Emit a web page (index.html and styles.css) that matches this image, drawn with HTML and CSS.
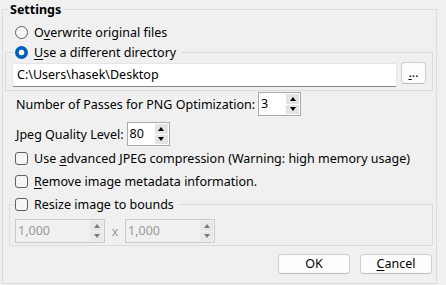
FILE: index.html
```html
<!DOCTYPE html>
<html lang="en">
<head>
    <meta charset="UTF-8">
    <title>Settings</title>
    <link rel="stylesheet" href="styles.css">
</head>
<body>
    <fieldset class="settings">
        <legend class="settings-title">Settings</legend>

        <label class="option-row first">
            <span class="radio"></span>
            <span>O<u>v</u>erwrite original files</span>
        </label>

        <fieldset class="group dir-group">
            <legend>
                <label class="option-row">
                    <span class="radio checked"></span>
                    <span><u>U</u>se a different directory</span>
                </label>
            </legend>
            <div class="dir-row">
                <div class="textbox">C:\Users\hasek\Desktop</div>
                <button class="btn browse"><u>.</u>..</button>
            </div>
        </fieldset>

        <div class="field-row passes-row">
            <span>Number of Passes for PNG Optimization:</span>
            <div class="spin">
                <span class="spin-value">3</span>
                <span class="spin-buttons"><span class="spin-up"></span><span class="spin-down"></span></span>
            </div>
        </div>

        <div class="field-row jpeg-row">
            <span>Jpeg Quality Level:</span>
            <div class="spin">
                <span class="spin-value">80</span>
                <span class="spin-buttons"><span class="spin-up"></span><span class="spin-down"></span></span>
            </div>
        </div>

        <label class="option-row check-row first-check">
            <span class="checkbox"></span>
            <span>Use <u>a</u>dvanced JPEG compression (Warning: high memory usage)</span>
        </label>
        <label class="option-row check-row">
            <span class="checkbox"></span>
            <span><u>R</u>emove image metadata information.</span>
        </label>

        <fieldset class="group resize-group">
            <legend>
                <label class="option-row">
                    <span class="checkbox"></span>
                    <span>Resize image to bounds</span>
                </label>
            </legend>
            <div class="bounds-row">
                <div class="spin wide disabled">
                    <span class="spin-value">1,000</span>
                    <span class="spin-buttons"><span class="spin-up"></span><span class="spin-down"></span></span>
                </div>
                <span class="times">x</span>
                <div class="spin wide disabled">
                    <span class="spin-value">1,000</span>
                    <span class="spin-buttons"><span class="spin-up"></span><span class="spin-down"></span></span>
                </div>
            </div>
        </fieldset>

        <div class="actions">
            <button class="btn action">OK</button>
            <button class="btn action"><u>C</u>ancel</button>
        </div>
    </fieldset>
</body>
</html>
```

FILE: styles.css
```css
body {
    margin: 0;
    width: 446px;
    height: 285px;
    overflow: hidden;
    background-color: #f0f0f0;
    font-family: "Noto Sans", "Open Sans", sans-serif;
    font-size: 12.5px;
    color: #000;
}

fieldset {
    min-width: 0;
    border: 1px solid #dcdcdc;
}

legend {
    line-height: 17px;
}

u {
    text-decoration-thickness: 1px;
    text-underline-offset: 2px;
}

.settings {
    margin: 1px 9px 0 2px;
    padding: 0;
}

.settings-title {
    font-weight: bold;
    margin-left: 5px;
    padding: 0 2px;
}

/* radio / checkbox rows */
.option-row {
    display: flex;
    align-items: center;
    gap: 6px;
    height: 20px;
    white-space: nowrap;
}

legend .option-row {
    height: 17px;
}

.option-row.first {
    margin: 4px 0 0 12px;
}

.radio {
    width: 13px;
    height: 13px;
    box-sizing: border-box;
    border: 1px solid #5f5f5f;
    border-radius: 50%;
    background-color: #f6f6f6;
    flex: none;
}

.radio.checked {
    border: none;
    background: radial-gradient(circle, #fff 0 2.6px, #005fb8 3.2px);
}

.checkbox {
    width: 13px;
    height: 13px;
    box-sizing: border-box;
    border: 1px solid #5f5f5f;
    border-radius: 3px;
    background-color: #f6f6f6;
    flex: none;
}

.check-row {
    margin: 3px 0 0 12px;
}

.check-row.first-check {
    margin-top: 2px;
}

/* grouped boxes */
.group {
    margin: 2px 3px 0 2px;
    padding: 0 6px 3px 6px;
}

.group legend {
    margin-left: 2px;
    padding: 0 5px 0 1px;
}

.dir-row {
    display: flex;
    align-items: flex-start;
    gap: 4px;
    margin-top: 1px;
}

.textbox {
    flex: 1;
    height: 24px;
    margin-top: 1px;
    box-sizing: border-box;
    background-color: #fff;
    border: 1px solid #e5e5e5;
    border-bottom-color: #868686;
    border-radius: 2px;
    padding-left: 4px;
    line-height: 22px;
}

.btn {
    font-family: inherit;
    font-size: 12.5px;
    color: #000;
    background-color: #fdfdfd;
    border: 1px solid #d0d0d0;
    border-bottom-color: #bcbcbc;
    border-radius: 4px;
    padding: 0;
    box-sizing: border-box;
}

.browse {
    width: 25px;
    height: 22px;
    line-height: 20px;
}

/* number fields */
.field-row {
    display: flex;
    align-items: center;
    gap: 3px;
    margin-left: 13px;
    white-space: nowrap;
}

.passes-row {
    margin-top: 1px;
}

.jpeg-row {
    margin-top: 6px;
}

.spin {
    display: flex;
    width: 43px;
    height: 24px;
    box-sizing: border-box;
    border: 1px solid #a9a9a9;
    background-color: #fff;
}

.spin-value {
    flex: 1;
    padding-left: 2px;
    line-height: 22px;
}

.spin-buttons {
    display: flex;
    flex-direction: column;
    gap: 1px;
    width: 13px;
    padding: 1px 1px 1px 0;
}

.spin-up,
.spin-down {
    flex: 1;
    display: flex;
    align-items: center;
    justify-content: center;
    background-color: #e3e3e3;
}

.spin-up::after {
    content: "";
    border-left: 3.5px solid transparent;
    border-right: 3.5px solid transparent;
    border-bottom: 4px solid #000;
}

.spin-down::after {
    content: "";
    border-left: 3.5px solid transparent;
    border-right: 3.5px solid transparent;
    border-top: 4px solid #000;
}

.spin.disabled {
    border-color: #cbcbcb;
    background-color: #f0f0f0;
    color: #9a9a9a;
}

.spin.disabled .spin-up,
.spin.disabled .spin-down {
    background-color: #e8e8e8;
}

.spin.disabled .spin-up::after {
    border-bottom-color: #7a7a7a;
}

.spin.disabled .spin-down::after {
    border-top-color: #7a7a7a;
}

.spin.wide {
    width: 90px;
}

/* resize box */
.resize-group {
    margin: 5px 3px 0 6px;
    padding: 0 6px 2px 4px;
}

.resize-group legend {
    margin-left: 0;
}

.bounds-row {
    display: flex;
    align-items: center;
    margin: 6px 0 0 1px;
}

.times {
    width: 20px;
    text-align: center;
    color: #9a9a9a;
}

/* dialog buttons */
.actions {
    display: flex;
    justify-content: flex-end;
    gap: 10px;
    padding: 8px 4px 9px 0;
}

.action {
    width: 72px;
    height: 20px;
    line-height: 18px;
}
```
